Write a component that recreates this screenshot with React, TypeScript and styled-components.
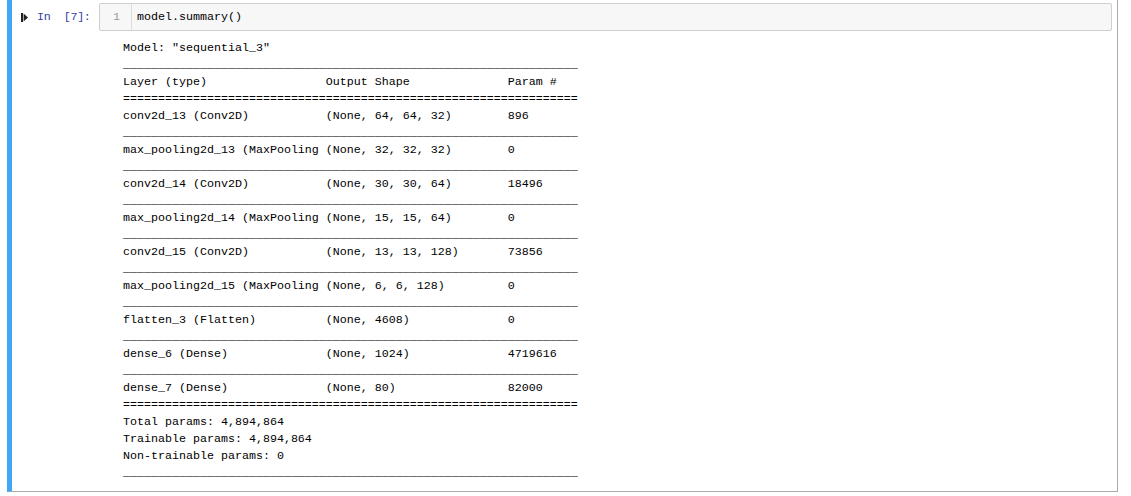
import React from "react";
import styled, { createGlobalStyle } from "styled-components";

const MONO = `"Liberation Mono", "DejaVu Sans Mono", monospace`;

type Layer = { name: string; shape: string; params: string };

const LAYERS: Layer[] = [
  { name: "conv2d_13 (Conv2D)", shape: "(None, 64, 64, 32)", params: "896" },
  { name: "max_pooling2d_13 (MaxPooling2D)", shape: "(None, 32, 32, 32)", params: "0" },
  { name: "conv2d_14 (Conv2D)", shape: "(None, 30, 30, 64)", params: "18496" },
  { name: "max_pooling2d_14 (MaxPooling2D)", shape: "(None, 15, 15, 64)", params: "0" },
  { name: "conv2d_15 (Conv2D)", shape: "(None, 13, 13, 128)", params: "73856" },
  { name: "max_pooling2d_15 (MaxPooling2D)", shape: "(None, 6, 6, 128)", params: "0" },
  { name: "flatten_3 (Flatten)", shape: "(None, 4608)", params: "0" },
  { name: "dense_6 (Dense)", shape: "(None, 1024)", params: "4719616" },
  { name: "dense_7 (Dense)", shape: "(None, 80)", params: "82000" },
];

// keras print_summary style: columns at 29 / 55 / 65
const fit = (s: string, w: number) => (s.length >= w ? s.slice(0, w - 1) + " " : s.padEnd(w));
const row = (a: string, b: string, c: string) => fit(a, 29) + fit(b, 26) + c;

function buildSummary() {
  const under = "_".repeat(65);
  const eq = "=".repeat(65);
  const lines: string[] = ['Model: "sequential_3"', under, row("Layer (type)", "Output Shape", "Param #"), eq];
  LAYERS.forEach((l, i) => {
    lines.push(row(l.name, l.shape, l.params));
    lines.push(i === LAYERS.length - 1 ? eq : under);
  });
  lines.push("Total params: 4,894,864");
  lines.push("Trainable params: 4,894,864");
  lines.push("Non-trainable params: 0");
  lines.push(under);
  return lines.join("\n");
}

function RunIcon() {
  return (
    <svg width="7" height="9" viewBox="0 0 7 9">
      <rect x="0" y="0" width="2" height="9" fill="#222" />
      <path d="M2.6 0.5 L7 4.5 L2.6 8.5 Z" fill="#222" />
    </svg>
  );
}

function App() {
  return (
    <>
      <GlobalStyle />
      <Cell>
        <InputRow>
          <Prompt>
            <RunIcon />
            <PromptText>In&nbsp;&nbsp;[7]:</PromptText>
          </Prompt>
          <InputArea>
            <Gutter>1</Gutter>
            <Code>model.summary()</Code>
          </InputArea>
        </InputRow>
        <Output>{buildSummary()}</Output>
      </Cell>
    </>
  );
}

const GlobalStyle = createGlobalStyle`
  html, body {
    margin: 0;
    padding: 0;
    background: #ffffff;
  }
`;

const Cell = styled.div`
  box-sizing: border-box;
  margin-left: 7px;
  width: 1111px;
  height: 492px;
  border: 1px solid #ababab;
  border-top: none;
  border-left: 5px solid #42a5f5;
  padding: 3px 5px 10px 0;
  display: flex;
  flex-direction: column;
`;

const InputRow = styled.div`
  display: flex;
  align-items: stretch;
`;

const Prompt = styled.div`
  width: 87px;
  flex-shrink: 0;
  display: flex;
  align-items: center;
  padding-left: 9px;
  box-sizing: border-box;
  gap: 9px;
`;

const PromptText = styled.span`
  font-family: ${MONO};
  font-size: 11.67px;
  color: #303f9f;
  white-space: pre;
  letter-spacing: -0.3px;
`;

const InputArea = styled.div`
  flex: 1;
  display: flex;
  background: #f7f7f7;
  border: 1px solid #cfcfcf;
  border-radius: 2px;
  font-family: ${MONO};
  font-size: 11.67px;
  line-height: 17px;
`;

const Gutter = styled.div`
  width: 32px;
  box-sizing: border-box;
  padding: 5px 11px 4px 0;
  text-align: right;
  color: #999999;
  border-right: 1px solid #dddddd;
`;

const Code = styled.div`
  padding: 5px 5px 4px 5px;
  color: #000000;
`;

const Output = styled.pre`
  margin: 9px 0 0 111px;
  font-family: ${MONO};
  font-size: 11.67px;
  line-height: 17px;
  color: #000000;
`;

export default App;
